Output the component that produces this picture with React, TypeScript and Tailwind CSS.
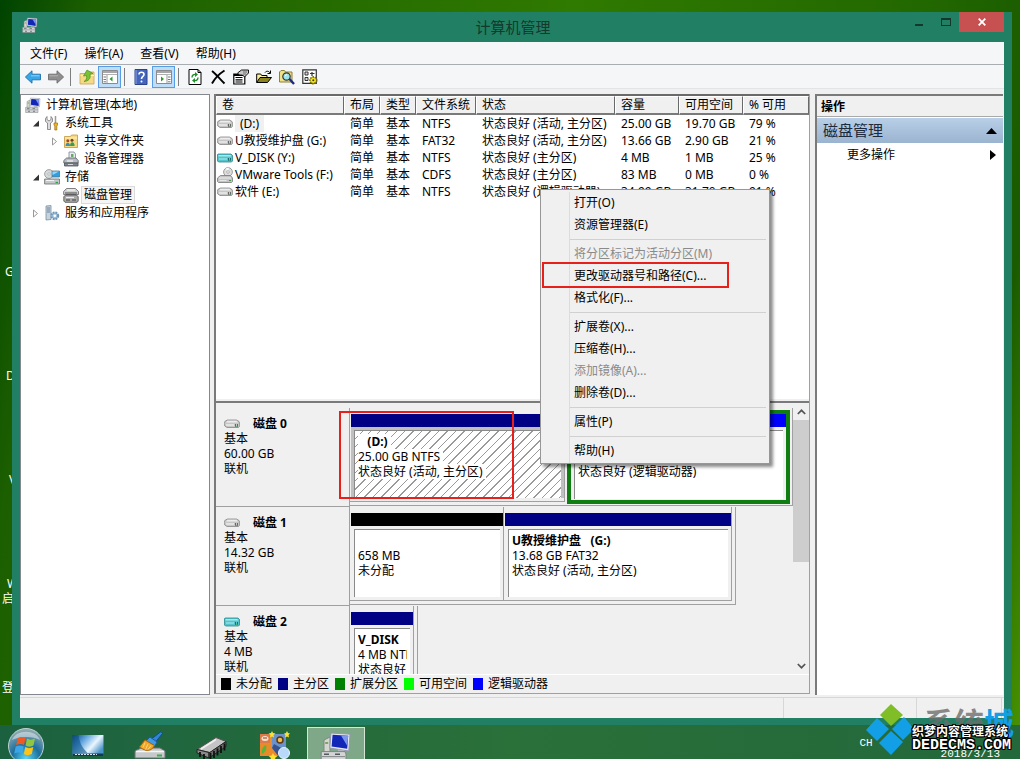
import clsx from "clsx";
import type { ReactNode } from "react";

interface Volume {
  name: string;
  icon: "drive" | "removable" | "cd";
  fs: string;
  status: string;
  size: string;
  free: string;
  percent: string;
  selected?: boolean;
}

const VOLUMES: Volume[] = [
  { name: "(D:)", icon: "drive", fs: "NTFS", status: "状态良好 (活动, 主分区)", size: "25.00 GB", free: "19.70 GB", percent: "79 %", selected: true },
  { name: "U教授维护盘 (G:)", icon: "drive", fs: "FAT32", status: "状态良好 (活动, 主分区)", size: "13.66 GB", free: "2.90 GB", percent: "21 %" },
  { name: "V_DISK (Y:)", icon: "removable", fs: "NTFS", status: "状态良好 (主分区)", size: "4 MB", free: "1 MB", percent: "25 %" },
  { name: "VMware Tools (F:)", icon: "cd", fs: "CDFS", status: "状态良好 (主分区)", size: "83 MB", free: "0 MB", percent: "0 %" },
  { name: "软件 (E:)", icon: "drive", fs: "NTFS", status: "状态良好 (逻辑驱动器)", size: "34.99 GB", free: "31.70 GB", percent: "91 %" },
];

const COLUMNS = [
  { label: "卷", width: "w-[128px]" },
  { label: "布局", width: "w-[36px]" },
  { label: "类型", width: "w-[36px]" },
  { label: "文件系统", width: "w-[60px]" },
  { label: "状态", width: "w-[139px]" },
  { label: "容量", width: "w-[64px]" },
  { label: "可用空间", width: "w-[64px]" },
  { label: "% 可用", width: "" },
];

const MENU = ["文件(F)", "操作(A)", "查看(V)", "帮助(H)"];

const CONTEXT_MENU: { label: string; disabled?: boolean; marked?: boolean }[][] = [
  [{ label: "打开(O)" }, { label: "资源管理器(E)" }],
  [
    { label: "将分区标记为活动分区(M)", disabled: true },
    { label: "更改驱动器号和路径(C)...", marked: true },
    { label: "格式化(F)..." },
  ],
  [
    { label: "扩展卷(X)..." },
    { label: "压缩卷(H)..." },
    { label: "添加镜像(A)...", disabled: true },
    { label: "删除卷(D)..." },
  ],
  [{ label: "属性(P)" }],
  [{ label: "帮助(H)" }],
];

const LEGEND = [
  { label: "未分配", color: "bg-black" },
  { label: "主分区", color: "bg-[#000084]" },
  { label: "扩展分区", color: "bg-[#008000]" },
  { label: "可用空间", color: "bg-[#00ff00]" },
  { label: "逻辑驱动器", color: "bg-[#0000ff]" },
];

/* ---------- icons ---------- */

const Svg = ({ children, size = 16 }: { children: ReactNode; size?: number }) => (
  <svg width={size} height={size} viewBox="0 0 16 16" className="shrink-0" aria-hidden="true">
    {children}
  </svg>
);

const ComputerIcon = ({ size = 16 }: { size?: number }) => (
  <Svg size={size}>
    <path d="M2 4.500l3-1.500v8H2z" fill="#d3d7d0" stroke="#82887f" strokeWidth=".5" />
    <path d="M2.600 6h1.500" stroke="#5f9a4f" strokeWidth=".8" />
    <path d="M5.500 1l9.500.6-.6 8.400-9.500-1.500z" fill="#e7e9f2" stroke="#9599ae" strokeWidth=".5" />
    <path d="M6.300 1.900l7.800.5-.5 6.500-7.800-1.200z" fill="#1226b8" />
    <path d="M10.500 2.200l3.600.2-.5 5z" fill="#7d96ee" />
    <path d="M9 9.300l3 .5v1.700H9z" fill="#b5b8c4" />
    <path d="M.6 10.300h11.900l.5 1.200v4H.6z" fill="#d2d4d6" stroke="#7f8385" strokeWidth=".5" />
    <path d="M1 12.800h11.500" stroke="#83878a" strokeWidth=".5" />
    <path d="M2 11.600h2.500M7.500 11.600h2.500M3 14.300h2M8 14.300h2" stroke="#55595b" strokeWidth=".7" />
  </Svg>
);

const DriveIcon = ({ color = "gray" }: { color?: "gray" | "cyan" }) => {
  const cyan = color === "cyan";
  return (
    <Svg>
      <path
        d={cyan ? "M1 4h13l1.500 1.500V11l-1 1H1.500L.5 11V4.500z" : "M3.500 4h9L15 5.500q.7 1 .7 2.500v2l-1.200 1.500H3L.8 10Q.3 9 .3 7.500t1-2.500z"}
        fill={cyan ? "#55c3cb" : "#c6c6c6"}
        stroke={cyan ? "#2b8890" : "#858585"}
        strokeWidth=".8"
      />
      <path d={cyan ? "M1.500 5h12l.8 1.500H1.500z" : "M3.500 4.800h9L14 6.500H2z"} fill={cyan ? "#a5eaee" : "#ededed"} />
      <path d="M2 9h8" stroke={cyan ? "#8ae0e5" : "#e9e9e9"} strokeWidth="1.600" />
      <path d="M11.500 8v2.800M13.500 8v2.800" stroke={cyan ? "#12656c" : "#5d5d5d"} strokeWidth=".9" />
      <path d="M12 10.600h1.500" stroke="#49a85a" strokeWidth=".8" />
    </Svg>
  );
};

const CdIcon = () => (
  <Svg>
    <circle cx="11" cy="5" r="4.400" fill="#dedede" stroke="#888" strokeWidth=".8" />
    <path d="M11 5L8.500 1.500A4.400 4.400 0 0 1 12 .8z" fill="#f8f8f8" />
    <circle cx="11" cy="5" r="1.300" fill="#fff" stroke="#888" strokeWidth=".6" />
    <path d="M.5 11L3.500 8.500h10l2 2.500v3.500l-1 1H1.500l-1-1z" fill="#c4c4c4" stroke="#777" strokeWidth=".8" />
    <path d="M2 11h12" stroke="#f0f0f0" />
    <path d="M2.500 13.500h7" stroke="#e8e8e8" />
    <path d="M12 13.500h2" stroke="#3e9e4e" />
  </Svg>
);

const ToolsIcon = () => (
  <Svg>
    <path d="M3 1.500v3l2 1.500 2-1.500v-3l1.500 2v3L6.500 8v6.500h-3V8L1.500 6.500v-3z" fill="#dcdcdc" stroke="#777" strokeWidth=".8" />
    <path d="M11.500 1v7" stroke="#9a9a9a" strokeWidth="1.500" />
    <path d="M10 8h3.500v2l-.7 1v4h-2v-4L10 10z" fill="#f0b51f" stroke="#9b6d08" strokeWidth=".7" />
  </Svg>
);

const SharedIcon = () => (
  <Svg>
    <path d="M1.500 3.500h6l1-1.500h6v12.500h-13z" fill="#f6d985" stroke="#bf973f" strokeWidth=".8" />
    <path d="M2 5h12" stroke="#fff0b8" />
    <circle cx="4.800" cy="7.800" r="1.500" fill="#a4482c" />
    <circle cx="9" cy="7.300" r="1.500" fill="#7d3f24" />
    <path d="M2.500 13c0-4.500 4.600-4.500 4.600 0z" fill="#3d8fb5" />
    <path d="M7 13c0-5 4.600-5 4.600 0z" fill="#3c9a55" />
  </Svg>
);

const DeviceIcon = () => (
  <Svg>
    <path d="M6 1h5l1.500 2v6H6z" fill="#e9edf2" stroke="#7c8791" strokeWidth=".8" />
    <path d="M8 3h2.500v3H8z" fill="#6aa86a" />
    <path d="M.8 9.500L3.500 7H13l2.200 2.500V12H.8z" fill="#b9bec4" stroke="#5a6066" strokeWidth=".8" />
    <path d="M1.500 12h13.500v3H1.500z" fill="#7d848b" stroke="#4d5358" strokeWidth=".8" />
    <path d="M4 10h6" stroke="#fff" />
    <path d="M5 13.500h5" stroke="#d5d9dd" />
  </Svg>
);

const StorageIcon = () => (
  <Svg>
    <circle cx="5" cy="5" r="4.400" fill="#d6d9da" stroke="#8a8f91" strokeWidth=".8" />
    <circle cx="5" cy="5" r="1.200" fill="#fff" stroke="#888" strokeWidth=".5" />
    <path d="M8 2h7.500v6H8z" fill="#2f9fe0" stroke="#5d7382" strokeWidth=".8" />
    <path d="M8.500 2.500H15L8.500 6z" fill="#97d6f7" />
    <path d="M.6 10h14.900v5H.6z" fill="#c5c8ca" stroke="#686c6f" strokeWidth=".8" />
    <path d="M2 11.500h8" stroke="#f4f4f4" />
    <path d="M11.500 13.500h2.500" stroke="#2ea344" strokeWidth="1.300" />
  </Svg>
);

const DiskManageIcon = () => (
  <Svg>
    <path d="M.6 4.500L3.500 1.500h9l3 3v3H.6z" fill="#cfcfcf" stroke="#666" strokeWidth=".8" />
    <path d="M4 3h8" stroke="#fff" />
    <path d="M2 6h12M3 8h10" stroke="#4b4b4b" />
    <path d="M.8 9.500L3 8h10l2.200 1.500V14l-1 1.300H2L.8 14z" fill="#a9a9a9" stroke="#4f4f4f" strokeWidth=".8" />
    <path d="M3 10.500h8" stroke="#eee" strokeWidth="1.200" />
    <path d="M3 13h4M9 13h4" stroke="#333" strokeWidth=".9" />
  </Svg>
);

const ServicesIcon = () => (
  <Svg>
    <path d="M2 1l5-.5v14L2 15z" fill="#c3d3df" stroke="#7b8fa0" strokeWidth=".8" />
    <path d="M3 3h3M3 5h3M3 7h3" stroke="#587089" strokeWidth=".8" />
    <circle cx="10.800" cy="10.800" r="3.400" fill="#9fc0dc" stroke="#6f95b5" strokeWidth="2" strokeDasharray="1.800 .9" />
    <circle cx="10.800" cy="10.800" r="1.300" fill="#fff" />
  </Svg>
);

const ArrowIcon = ({ forward = false }: { forward?: boolean }) => (
  <Svg>
    <path
      d={forward ? "M15.600 8L9 1.800v3.400H.5v5.600H9v3.400z" : "M.4 8L7 1.800v3.400h8.500v5.600H7v3.400z"}
      fill={forward ? "#8f8f8f" : "#38a7e8"}
      stroke={forward ? "#6b6b6b" : "#1f6fa8"}
      strokeWidth=".9"
    />
    <path d={forward ? "M1.500 6.800H10" : "M6 6.800h8.500"} stroke={forward ? "#b5b5b5" : "#8ed4fa"} />
  </Svg>
);

const FolderUpIcon = () => (
  <Svg>
    <path d="M1 4.500h7l1-1.500h6V15H1z" fill="#f5d988" stroke="#c9a44c" strokeWidth=".8" />
    <path d="M1.500 6.500H15" stroke="#fdf1c0" />
    <path d="M5 12.500c2.500-1.500 3-3 2.500-6L4.500 7 8 1l6 3.500-3 .8c1 4-1.500 7-6 7.200z" fill="#78c235" stroke="#4b8d18" strokeWidth=".7" />
  </Svg>
);

const PaneIcon = ({ right = false }: { right?: boolean }) => (
  <Svg>
    <path d="M.5 1.500h15v13H.5z" fill="#fff" stroke="#8b8b8b" />
    <path d="M1 3h14" stroke="#8f9296" strokeWidth="1.600" />
    <path d="M1 5.500h14" stroke="#b0b0b0" />
    <path d={right ? "M11 6v8" : "M5 6v8"} stroke="#999" />
    <path d={right ? "M12 8h2.500M12 10.500h2.500M12 12.800h2.500" : "M1.500 8H4M1.500 10.500H4M1.500 12.800H4"} stroke="#777" />
    <path d={right ? "M5 7.500v5L8 10z" : "M10.500 7.500v5L7.500 10z"} fill="#2f9a2f" />
  </Svg>
);

const HelpIcon = () => (
  <Svg>
    <path d="M2 .5h12v15H2z" fill="#4565bd" stroke="#2b4288" />
    <path d="M3 1v14" stroke="#8aa4e8" />
    <path d="M6 5.500C6 2.500 11 2.500 11 5.500c0 2-2.500 2-2.500 4.500" fill="none" stroke="#fff" strokeWidth="1.600" />
    <circle cx="8.500" cy="12.500" r="1" fill="#fff" />
  </Svg>
);

const RefreshIcon = () => (
  <Svg>
    <path d="M2 .5h9l3 3v12H2z" fill="#fff" stroke="#000" />
    <path d="M11 .5v3h3" fill="none" stroke="#000" />
    <path d="M5 8.500C5 6 7 5 9 5.500" fill="none" stroke="#1f8f2c" strokeWidth="1.400" />
    <path d="M8 3l3 2.500L8 8z" fill="#1f8f2c" />
    <path d="M11 8.500c0 2.500-2 3.500-4 3" fill="none" stroke="#1f8f2c" strokeWidth="1.400" />
    <path d="M8 9l-3 2.500L8 14z" fill="#1f8f2c" />
  </Svg>
);

const DeleteIcon = () => (
  <Svg>
    <path d="M2 2c4 3 8 8 12.500 12.500M14.500 1.500C9 5 5 9 2 14.500" fill="none" stroke="#000" strokeWidth="1.900" />
  </Svg>
);

const PropertiesIcon = () => (
  <Svg>
    <path d="M.8 5h11v10H.8z" fill="#fff" stroke="#000" strokeWidth="1.200" />
    <path d="M1 6h10.500" stroke="#000" strokeWidth="2" />
    <path d="M2.500 8.500h7M2.500 10.800h7M2.500 13h7" stroke="#000" strokeWidth="1.200" />
    <path d="M4.500 4l4-3h7v3l-4 4-2-2H6.500z" fill="#c9c9c9" stroke="#000" strokeWidth=".9" />
    <path d="M10 3h4M10 5h3" stroke="#555" strokeWidth=".8" />
  </Svg>
);

const OpenIcon = () => (
  <Svg>
    <path d="M.7 13.500V5h4l1 1.500H11V9" fill="#ffef9c" stroke="#000" />
    <path d="M.7 13.500L4 8.500h11.500l-4 5z" fill="#8a8420" stroke="#000" />
    <path d="M9 3.500c1.500-2 4-1.500 5 .5M14.500 1.500V4.500h-3" fill="none" stroke="#000" />
  </Svg>
);

const SearchIcon = () => (
  <Svg>
    <path d="M.5 3L2 1.500h3.500l1 1.500H13v10H.5z" fill="#efe08a" stroke="#8d8134" />
    <circle cx="7.500" cy="7.500" r="3.700" fill="#9be4ec" stroke="#333" strokeWidth="1.200" />
    <path d="M6 7L8 5.500" stroke="#fff" />
    <path d="M10.500 10l4.500 5" stroke="#1a2a8a" strokeWidth="2.400" />
  </Svg>
);

const SettingsIcon = () => (
  <Svg>
    <path d="M.8.800h13.500v13.500H.8z" fill="#fff" stroke="#333" strokeWidth="1.200" />
    <path d="M3 3h3v3H3zM3 8.500h3v3H3z" fill="#ddd" stroke="#333" />
    <path d="M8 4.500h4.500M10 3v4" stroke="#333" strokeWidth="1.200" />
    <circle cx="11.300" cy="11.300" r="3.200" fill="#f2e21c" stroke="#7a7000" strokeWidth="2" strokeDasharray="1.500 .8" />
    <circle cx="11.300" cy="11.300" r="2.400" fill="#f7e81f" />
    <circle cx="11.300" cy="11.300" r="1" fill="#333" />
  </Svg>
);

const VOLUME_ICONS = {
  drive: <DriveIcon />,
  removable: <DriveIcon color="cyan" />,
  cd: <CdIcon />,
};

/* ---------- window chrome ---------- */

const TitleBar = () => (
  <header className="flex h-[30px] shrink-0 items-start pl-[2px]">
    <div className="flex w-[98px] pt-[5px]">
      <ComputerIcon />
    </div>
    <h1 className="flex-1 pt-1 text-center text-[15px] leading-[22px] text-[#14382b]">计算机管理</h1>
    <div className="flex w-[98px]">
      <button aria-label="最小化" className="flex h-5 w-[26px] items-center justify-center pt-[5px]">
        <span className="h-[2px] w-2 bg-[#14382b]" />
      </button>
      <button aria-label="最大化" className="flex h-5 w-[27px] items-center justify-center">
        <span className="h-2 w-[10px] border border-t-2 border-[#14382b]" />
      </button>
      <button aria-label="关闭" className="flex h-5 w-[45px] items-center justify-center bg-[#c75050]">
        <svg width="8" height="8" viewBox="0 0 8 8" aria-hidden="true">
          <path d="M.7.700l6.600 6.600M7.300.700L.7 7.300" stroke="#fff" strokeWidth="1.800" />
        </svg>
      </button>
    </div>
  </header>
);

const ToolButton = ({ label, active, children }: { label: string; active?: boolean; children: ReactNode }) => (
  <button
    aria-label={label}
    className={clsx(
      "flex h-[22px] w-[23px] items-center justify-center",
      active && "border border-[#569de5] bg-[#bfdcf8]"
    )}
  >
    {children}
  </button>
);

const ToolSeparator = () => <span className="mr-1 ml-[3px] h-[18px] w-px bg-[#7e7e7e]" />;

const Toolbar = () => (
  <div className="flex h-6 shrink-0 items-center border-b border-[#e2e4e6] bg-[#f5f6f8] pl-px">
    <ToolButton label="后退"><ArrowIcon /></ToolButton>
    <ToolButton label="前进"><ArrowIcon forward /></ToolButton>
    <ToolSeparator />
    <ToolButton label="向上"><FolderUpIcon /></ToolButton>
    <ToolButton label="控制台树" active><PaneIcon /></ToolButton>
    <ToolSeparator />
    <ToolButton label="帮助"><HelpIcon /></ToolButton>
    <ToolButton label="操作窗格" active><PaneIcon right /></ToolButton>
    <ToolSeparator />
    <ToolButton label="刷新"><RefreshIcon /></ToolButton>
    <ToolButton label="删除"><DeleteIcon /></ToolButton>
    <ToolButton label="属性"><PropertiesIcon /></ToolButton>
    <ToolButton label="打开"><OpenIcon /></ToolButton>
    <ToolButton label="查找"><SearchIcon /></ToolButton>
    <ToolButton label="设置"><SettingsIcon /></ToolButton>
  </div>
);

/* ---------- tree ---------- */

interface TreeItemProps {
  icon: ReactNode;
  label: string;
  indent: string;
  state?: "open" | "closed";
  selected?: boolean;
}

const TreeItem = ({ icon, label, indent, state, selected }: TreeItemProps) => (
  <li className={clsx("flex h-[18px] items-center", indent)}>
    <span className="flex w-4 shrink-0 justify-center">
      {state && (
        <svg width="8" height="9" viewBox="0 0 8 9" aria-hidden="true">
          {state === "open" ? (
            <path d="M7 1.500v6H1z" fill="#333" />
          ) : (
            <path d="M1.500 1v7l4-3.500z" fill="#fff" stroke="#999" />
          )}
        </svg>
      )}
    </span>
    {icon}
    <span
      className={clsx(
        "ml-[2px] border px-[2px] leading-4 whitespace-nowrap",
        selected ? "border-[#dadada] bg-[#f5f5f5]" : "border-transparent"
      )}
    >
      {label}
    </span>
  </li>
);

const Tree = () => (
  <nav className="w-[190px] shrink-0 border border-[#828790] bg-white pt-px">
    <ul>
      <TreeItem indent="-ml-3" icon={<ComputerIcon />} label="计算机管理(本地)" />
      <TreeItem indent="pl-[7px]" icon={<ToolsIcon />} label="系统工具" state="open" />
      <TreeItem indent="pl-[26px]" icon={<SharedIcon />} label="共享文件夹" state="closed" />
      <TreeItem indent="pl-[26px]" icon={<DeviceIcon />} label="设备管理器" />
      <TreeItem indent="pl-[7px]" icon={<StorageIcon />} label="存储" state="open" />
      <TreeItem indent="pl-[26px]" icon={<DiskManageIcon />} label="磁盘管理" selected />
      <TreeItem indent="pl-[7px]" icon={<ServicesIcon />} label="服务和应用程序" state="closed" />
    </ul>
  </nav>
);

/* ---------- volume list ---------- */

const VolumeTable = () => (
  <div className="h-[305px] shrink-0 overflow-hidden border-t-2 border-[#696969] bg-white">
    <table className="w-full table-fixed border-separate border-spacing-0 whitespace-nowrap">
      <thead>
        <tr className="h-[19px] bg-[#f0f0f0]">
          {COLUMNS.map((col) => (
            <th
              key={col.label}
              className={clsx(
                "border-t border-r border-b-2 border-l border-t-white border-r-[#696969] border-b-[#7a7a7a] border-l-white p-0 pl-[5px] text-left leading-4 font-normal",
                col.width
              )}
            >
              {col.label}
            </th>
          ))}
        </tr>
      </thead>
      <tbody>
        {VOLUMES.map((v) => (
          <tr key={v.name} className="h-[17px] leading-[17px]">
            <td className="p-0">
              <span className="flex items-center gap-[2px] pl-px">
                {VOLUME_ICONS[v.icon]}
                <span className={clsx(v.selected && "bg-[#f0f0f0] px-[5px]")}>{v.name}</span>
              </span>
            </td>
            <td className="p-0 pl-[6px]">简单</td>
            <td className="p-0 pl-[6px]">基本</td>
            <td className="p-0 pl-[6px]">{v.fs}</td>
            <td className="p-0 pl-[6px]">{v.status}</td>
            <td className="p-0 pl-[6px]">{v.size}</td>
            <td className="p-0 pl-[6px]">{v.free}</td>
            <td className="p-0 pl-[6px]">{v.percent}</td>
          </tr>
        ))}
      </tbody>
    </table>
  </div>
);

/* ---------- disk map ---------- */

interface PartitionProps {
  width: string;
  bar: string;
  lines: string[];
  selected?: boolean;
  logical?: boolean;
}

const Partition = ({ width, bar, lines, selected, logical }: PartitionProps) => (
  <div
    className={clsx(
      "flex shrink-0 flex-col",
      width,
      logical
        ? "mt-[2px] ml-[2px] h-[94px] border-4 border-[#0f7d12] pb-px"
        : "h-[94px] border-r border-b border-[#a0a0a0] pt-[6px] pb-[3px]"
    )}
  >
    <div className={clsx("h-[13px] shrink-0", bar, !logical && "ml-px")} />
    <div className={clsx("flex min-h-0 flex-1 px-[3px] pt-[3px]", !logical && "ml-px", selected && "bg-[#c0c0c0]")}>
      <div
        className={clsx(
          "min-w-0 flex-1 overflow-hidden border-t border-l border-[#8a8a8a] px-[3px] pt-[3px] leading-[15px] whitespace-pre",
          selected
            ? "bg-[repeating-linear-gradient(135deg,#fff_0px,#fff_5px,#9a9a9a_5px,#9a9a9a_6px)]"
            : "bg-white"
        )}
      >
        {lines.map((line, i) => (
          <p key={i} className={clsx("h-[15px] overflow-hidden", i === 0 && "font-bold")}>
            <span className="bg-white">{line}</span>
          </p>
        ))}
      </div>
    </div>
  </div>
);

interface DiskRowProps {
  name: string;
  size: string;
  color?: "gray" | "cyan";
  full?: boolean;
  children: ReactNode;
}

const DiskRow = ({ name, size, color, full, children }: DiskRowProps) => (
  <section className="flex h-[99px] shrink-0">
    <div className="w-[134px] shrink-0 border-r border-b border-[#a0a0a0] pt-2 pl-2 leading-[15px]">
      <div className="flex items-start gap-[13px]">
        <DriveIcon color={color} />
        <h2 className="h-[15px] font-bold">{name}</h2>
      </div>
      <div className="-mt-px">
        <p>基本</p>
        <p>{size}</p>
        <p>联机</p>
      </div>
    </div>
    <div className={clsx("flex h-[98px] border-r border-b border-[#a0a0a0]", full ? "flex-1" : "pr-[3px]")}>{children}</div>
  </section>
);

const ScrollBar = () => (
  <div className="flex w-4 shrink-0 flex-col bg-[#f0f0f0]">
    <button aria-label="向上滚动" className="flex h-[17px] items-center justify-center">
      <svg width="9" height="6" viewBox="0 0 9 6" aria-hidden="true">
        <path d="M.8 5l3.700-3.700L8.200 5" fill="none" stroke="#555" strokeWidth="1.700" />
      </svg>
    </button>
    <div className="flex-1">
      <div className="h-[60%] bg-[#cdcdcd]" />
    </div>
    <button aria-label="向下滚动" className="flex h-[17px] items-center justify-center">
      <svg width="9" height="6" viewBox="0 0 9 6" aria-hidden="true">
        <path d="M.8 1l3.700 3.700L8.200 1" fill="none" stroke="#555" strokeWidth="1.700" />
      </svg>
    </button>
  </div>
);

const DiskMap = () => (
  <div className="flex min-h-0 flex-1">
    <div className="relative flex min-w-0 flex-1 flex-col overflow-hidden pt-[5px]">
      <DiskRow name="磁盘 0" size="60.00 GB" full>
        <Partition
          width="w-[215px]"
          bar="bg-[#000084]"
          selected
          lines={["   (D:) ", "25.00 GB NTFS ", "状态良好 (活动, 主分区) "]}
        />
        <Partition
          width="w-[223px]"
          bar="bg-[#0000ff]"
          logical
          lines={["", "", "状态良好 (逻辑驱动器)"]}
        />
      </DiskRow>
      <DiskRow name="磁盘 1" size="14.32 GB">
        <Partition width="w-[154px]" bar="bg-black" lines={["", "658 MB", "未分配"]} />
        <Partition
          width="w-[228px]"
          bar="bg-[#000084]"
          lines={["U教授维护盘   (G:)", "13.68 GB FAT32", "状态良好 (活动, 主分区)"]}
        />
      </DiskRow>
      <DiskRow name="磁盘 2" size="4 MB" color="cyan">
        <Partition width="w-[64px]" bar="bg-[#000084]" lines={["V_DISK", "4 MB NTFS", "状态良好"]} />
      </DiskRow>
      <div className="absolute top-2 left-[123px] h-[88px] w-[175px] border-2 border-[#e8201c]" />
    </div>
    <ScrollBar />
  </div>
);

const Legend = () => (
  <ul className="flex h-[19px] shrink-0 items-center gap-[6px] overflow-hidden border-t border-white pl-[5px] whitespace-nowrap">
    {LEGEND.map((item) => (
      <li key={item.label} className="flex items-center gap-[5px] leading-4">
        <span className={clsx("h-3 w-[10px]", item.color)} />
        {item.label}
      </li>
    ))}
  </ul>
);

const ContextMenu = () => (
  <div
    role="menu"
    className="absolute top-[95px] left-[324px] w-[230px] border border-[#979797] bg-[#f0f0f0] px-px pt-[2px] shadow-[3px_3px_3px_rgba(0,0,0,0.45)]"
  >
    <div className="ml-[27px] border-l border-[#dcdcdc] pb-px">
      {CONTEXT_MENU.map((group, i) => (
        <div key={i} className={clsx("mr-[2px]", i > 0 && "mt-[3px] border-t border-[#d0d0d0] pt-[3px]")}>
          {group.map((item) => (
            <button
              key={item.label}
              role="menuitem"
              disabled={item.disabled}
              className={clsx(
                "relative block h-[22px] w-full pl-1 text-left leading-[22px] whitespace-nowrap",
                item.disabled && "text-[#8a8a8a]"
              )}
            >
              {item.label}
              {item.marked && (
                <span className="absolute -top-[3px] -left-7 h-[26px] w-[187px] border-2 border-[#e8201c]" />
              )}
            </button>
          ))}
        </div>
      ))}
    </div>
  </div>
);

/* ---------- actions ---------- */

const Actions = () => (
  <aside className="mr-px w-[188px] shrink-0 border-t-2 border-l-2 border-[#7a7a7a] bg-white">
    <h2 className="h-[21px] border-b border-[#a8a8a8] bg-[#f0f0f0] pl-1 leading-[21px] font-bold">操作</h2>
    <button className="mt-px flex h-[25px] w-full items-center justify-between bg-linear-to-b from-[#b9cfe8] to-[#9ab3cf] px-[6px] text-[15px] text-[#1c2a3c]">
      磁盘管理
      <svg width="11" height="6" viewBox="0 0 11 6" aria-hidden="true">
        <path d="M0 6l5.500-6L11 6z" fill="#000" />
      </svg>
    </button>
    <button className="flex h-[23px] w-full items-center justify-between pr-[7px] pl-[30px]">
      更多操作
      <svg width="6" height="10" viewBox="0 0 6 10" aria-hidden="true">
        <path d="M0 0v10l6-5z" fill="#000" />
      </svg>
    </button>
  </aside>
);

/* ---------- taskbar ---------- */

const StartOrb = () => (
  <svg width="38" height="38" viewBox="0 0 38 38" className="block" aria-hidden="true">
    <defs>
      <radialGradient id="orb" cx="50%" cy="85%" r="80%">
        <stop offset="0" stopColor="#5ad6f5" />
        <stop offset=".5" stopColor="#1b6f9e" />
        <stop offset="1" stopColor="#8fa9b0" />
      </radialGradient>
    </defs>
    <circle cx="19" cy="19" r="17.500" fill="url(#orb)" stroke="#bcd3d3" />
    <path d="M5 13C9 2 29 2 33 13 26 9 13 9 5 13z" fill="#fff" opacity=".45" />
    <path d="M11 11c3-1.500 5-1.500 7.500 0L17 18c-2.500-1.500-5-1.500-8 0z" fill="#ee5a24" />
    <path d="M20 11.500c2.500 1.500 5 1.500 8 0L26.500 18.500c-3 1.500-5.500 1.500-8 0z" fill="#90c73e" />
    <path d="M8.700 19.500c3-1.500 5.500-1.500 8 0l-1.500 7c-2.500-1.500-5-1.500-8 0z" fill="#3aa6e8" />
    <path d="M18.300 20c2.500 1.500 5 1.500 8 0l-1.500 7c-3 1.500-5.500 1.500-8 0z" fill="#fcc419" />
  </svg>
);

const WallpaperIcon = () => (
  <svg width="32" height="32" viewBox="0 0 32 32" aria-hidden="true">
    <defs>
      <linearGradient id="wall" x1="0" y1="0" x2="1" y2=".6">
        <stop offset="0" stopColor="#0c3a68" />
        <stop offset=".35" stopColor="#5aa0dc" />
        <stop offset=".7" stopColor="#eaf6ff" />
        <stop offset="1" stopColor="#4b94c8" />
      </linearGradient>
    </defs>
    <path d="M.5 4h31v21H.5z" fill="url(#wall)" />
    <path d="M.5 4h6c1 8 4 13 9 18H.5z" fill="#0b5488" opacity=".6" />
    <path d="M.5 22.500h31V25H.5z" fill="#0d3a58" />
    <path d="M3 23.500h22" stroke="#d5e4ee" strokeDasharray="2 1" />
  </svg>
);

const CleanerIcon = () => (
  <svg width="32" height="32" viewBox="0 0 32 32" aria-hidden="true">
    <path d="M1 20l6-3h19l5 3v7H1z" fill="#c6c9cc" stroke="#6c7074" />
    <path d="M2 20.500h28" stroke="#f5f5f5" strokeWidth="1.500" />
    <path d="M23 24.500h5" stroke="#3cab48" strokeWidth="2" />
    <path d="M27 .5l1.500 2-7 8.500-4-3z" fill="#2e86d6" stroke="#154c86" />
    <path d="M16 6l7 5-2 4-9-5z" fill="#3f9be6" stroke="#1d5c9c" />
    <path d="M11 9L20.500 14.500c-2 4-5 5-8 5-3-1-5-2-7-3.500z" fill="#f5a623" stroke="#a96508" />
    <path d="M11 11.500l-2 5M14 13L11.500 18.500M17 14.500l-3 4" stroke="#fbd58a" />
  </svg>
);

const ChipIcon = () => (
  <svg width="32" height="32" viewBox="0 0 32 32" aria-hidden="true">
    <path d="M1 18.500L20 6.500l10 4-16 11z" fill="#c4c4c4" stroke="#555" />
    <path d="M1 18.500V22l12 5v-5.500z" fill="#8b8b8b" stroke="#222" />
    <path d="M13 22v5l17-11.500v-5z" fill="#6a6a6a" stroke="#222" />
    <path d="M4 21v5M8 23v5M14.500 22v7M18 20v7M21.500 17.500v7M25 15v7M28.500 12.500v7" stroke="#111" strokeWidth="1.800" />
    <path d="M5 18L20 8.500" stroke="#f0f0f0" strokeWidth="1.500" />
  </svg>
);

const PhotoIcon = () => (
  <svg width="32" height="32" viewBox="0 0 32 32" aria-hidden="true">
    <path d="M2 3h26v22H2z" fill="#e98a2b" />
    <path d="M14 3h14v14H14z" fill="#6c93c9" />
    <path d="M2 3h10v9H2z" fill="#dd7a4c" />
    <ellipse cx="7" cy="7.500" rx="3.500" ry="2.500" fill="#f6e6d0" />
    <path d="M5 7h4" stroke="#a03018" />
    <circle cx="22" cy="9" r="3" fill="#f0c04a" stroke="#5a3818" strokeWidth="1.500" />
    <path d="M4 23c-1-5 1-7 4-9 1 4 0 7-4 9z" fill="#57b53a" />
    <path d="M16 13l9 5-4 8-7-9z" fill="#35548f" />
    <circle cx="26" cy="22" r="5.500" fill="#b9d9fb" stroke="#e9f4ff" />
    <path d="M14 0l1 2 2.500.5-2 1.500.5 2.500-2-1-2 1 .5-2.500-2-1.500L13 2zM29 0l1 2 2 .5-1.500 1.500.5 2.500-2-1-2 1 .5-2.500L26 2.500l2-.5zM15 22l1.300 2.500 3 .5-2.200 2 .6 3L15 28.500 12.300 30l.6-3-2.200-2 3-.5z" fill="#ffe135" />
  </svg>
);

const TASKS = [
  { label: "桌面", icon: <WallpaperIcon /> },
  { label: "磁盘清理", icon: <CleanerIcon /> },
  { label: "内存", icon: <ChipIcon /> },
  { label: "图片", icon: <PhotoIcon /> },
  { label: "计算机管理", icon: <ComputerIcon size={32} />, active: true },
];

const Taskbar = () => (
  <footer className="flex h-[34px] shrink-0 items-start overflow-hidden bg-linear-to-r from-[#1b6140] via-[#2a7039] to-[#22683b] pt-[2px]">
    <button aria-label="开始" className="w-[57px] shrink-0 pl-[7px]">
      <StartOrb />
    </button>
    {TASKS.map((task) => (
      <button
        key={task.label}
        aria-label={task.label}
        className={clsx(
          "mx-[2px] flex h-10 w-[58px] shrink-0 items-start justify-center border pt-[3px]",
          task.active ? "border-[#d5e6d8] bg-[#7fa888]" : "border-transparent"
        )}
      >
        {task.icon}
      </button>
    ))}
    <div className="flex flex-1 items-start justify-end gap-[68px] pr-5 font-['Liberation_Mono',monospace] text-[11px] leading-[13px] text-white">
      <span className="pt-[10px]">CH</span>
      <span className="pt-[21px]">2018/3/13</span>
    </div>
  </footer>
);

const Watermark = () => (
  <div className="pointer-events-none absolute right-1 bottom-0 flex h-[56px] w-[150px] overflow-hidden">
    <svg width="46" height="52" viewBox="0 0 46 52" className="shrink-0" aria-hidden="true">
      <path d="M25 1l12 11-12 11L14 12z" fill="#7fbe26" />
      <path d="M11 15l12 11-12 12L0 27z" fill="#139fe6" />
      <path d="M38 14l10 12-11 11L26 26z" fill="#139fe6" />
      <path d="M25 28l12 11-12 13L13 40z" fill="#139fe6" />
    </svg>
    <div className="relative flex-1">
      <p className="absolute top-0 left-3 text-[30px] leading-[40px] font-bold whitespace-nowrap text-[#6c6c6c]/80">
        系统<span className="text-[#139fe6]">城</span>
      </p>
      <p className="relative mt-[21px] text-[12px] leading-[16px] font-bold whitespace-nowrap text-white [text-shadow:1px_0_#000,-1px_0_#000,0_1px_#000,0_-1px_#000,1px_1px_#000,-1px_-1px_#000,1px_-1px_#000,-1px_1px_#000]">
        织梦内容管理系统
      </p>
      <p className="relative font-['Liberation_Mono',monospace] text-[15px] leading-[12px] font-bold text-white [text-shadow:1px_0_#000,-1px_0_#000,0_1px_#000,0_-1px_#000,1px_1px_#000,-1px_-1px_#000,1px_-1px_#000,-1px_1px_#000]">
        DEDECMS.COM
      </p>
    </div>
  </div>
);

const DesktopLabels = () => (
  <div className="absolute top-0 left-0 h-full w-3 overflow-hidden leading-[15px] whitespace-nowrap text-white">
    <span className="absolute top-[264px] left-[5px]">G</span>
    <span className="absolute top-[368px] left-[6px]">D</span>
    <span className="absolute top-[472px] left-[9px]">V</span>
    <span className="absolute top-[576px] left-[7px]">W</span>
    <span className="absolute top-[591px] left-[2px]">启</span>
    <span className="absolute top-[680px] left-[2px]">登</span>
  </div>
);

export default function App() {
  return (
    <div className="relative flex h-screen flex-col overflow-hidden bg-[linear-gradient(100deg,#004300_0%,#1c5f00_8%,#2f7a00_50%,#226800_80%,#1a5a00_92%,#4a9500_100%)] font-['Noto_Sans','Noto_Sans_CJK_SC',sans-serif] text-[12px] text-black">
      <DesktopLabels />
      <main className="relative mt-3 mr-2 ml-3 flex min-h-0 flex-1 flex-col bg-[#218064] px-2 pb-[7px]">
        <TitleBar />
        <div className="flex min-h-0 flex-1 flex-col bg-[#f0f0f0]">
          <div className="flex h-[23px] shrink-0 items-center gap-[17px] border-b border-[#a9adb0] bg-[#f5f6f8] pt-px pl-[10px]">
            {MENU.map((item) => (
              <button key={item} className="leading-[20px]">
                {item}
              </button>
            ))}
          </div>
          <Toolbar />
          <div className="flex min-h-0 flex-1 pt-[5px] pb-[2px]">
            <Tree />
            <div className="relative mr-[5px] mb-px ml-1 flex min-w-0 flex-1 flex-col border-r border-b border-l-2 border-[#a0a0a0] border-l-[#7a7a7a]">
              <VolumeTable />
              <div className="mt-[2px] h-[2px] shrink-0 bg-[#7a7a7a]" />
              <DiskMap />
              <Legend />
              <ContextMenu />
            </div>
            <Actions />
          </div>
          <div className="flex h-[21px] shrink-0 justify-end border-t border-[#d7d7d7]">
            <span className="w-[133px] border-l border-[#d7d7d7]" />
            <span className="w-[86px] border-x border-[#d7d7d7]" />
            <span className="w-[2px]" />
          </div>
        </div>
      </main>
      <Taskbar />
      <Watermark />
    </div>
  );
}
